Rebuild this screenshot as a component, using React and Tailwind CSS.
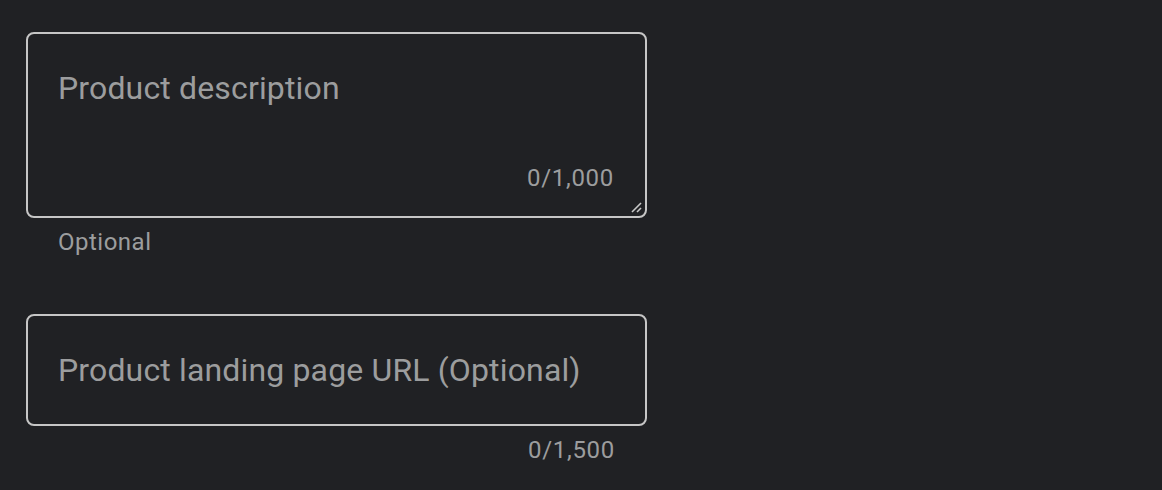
import React from "react";

function Grip() {
  return (
    <svg className="absolute right-[2px] bottom-[2px]" width="14" height="14" viewBox="0 0 14 14">
      <line x1="3" y1="12" x2="12" y2="3" stroke="#c8c8c8" strokeWidth="1.6" />
      <line x1="8" y1="12" x2="12" y2="8" stroke="#c8c8c8" strokeWidth="1.6" />
    </svg>
  );
}

export default function App() {
  return (
    <div
      className="w-[1162px] h-[490px] bg-[#202124] pl-[26px] pt-[32px]"
      style={{ fontFamily: "Roboto, 'Noto Sans', sans-serif" }}
    >
      <div className="w-[621px]">
        <div className="relative flex flex-col h-[186px] border-2 border-[#c6c6c6] rounded-[8px] pl-[30px] pr-[31px] pt-[34px] pb-[26px]">
          <div className="text-[32px] leading-[40px] text-[#9c9d9e] tracking-[0.15px]">Product description</div>
          <div className="mt-auto self-end text-[24px] leading-[24px] text-[#9c9d9e] tracking-[0.7px]">0/1,000</div>
          <Grip />
        </div>
        <div className="mt-[12px] pl-[32px] text-[24px] leading-[24px] text-[#9c9d9e] tracking-[0.5px]">Optional</div>

        <div className="mt-[60px] flex items-center h-[112px] border-2 border-[#c6c6c6] rounded-[8px] pl-[30px] pr-[31px]">
          <div className="text-[32px] leading-[40px] text-[#9c9d9e] tracking-[0.15px]">Product landing page URL (Optional)</div>
        </div>
        <div className="mt-[12px] pr-[32px] text-right text-[24px] leading-[24px] text-[#9c9d9e] tracking-[0.7px]">0/1,500</div>
      </div>
    </div>
  );
}
